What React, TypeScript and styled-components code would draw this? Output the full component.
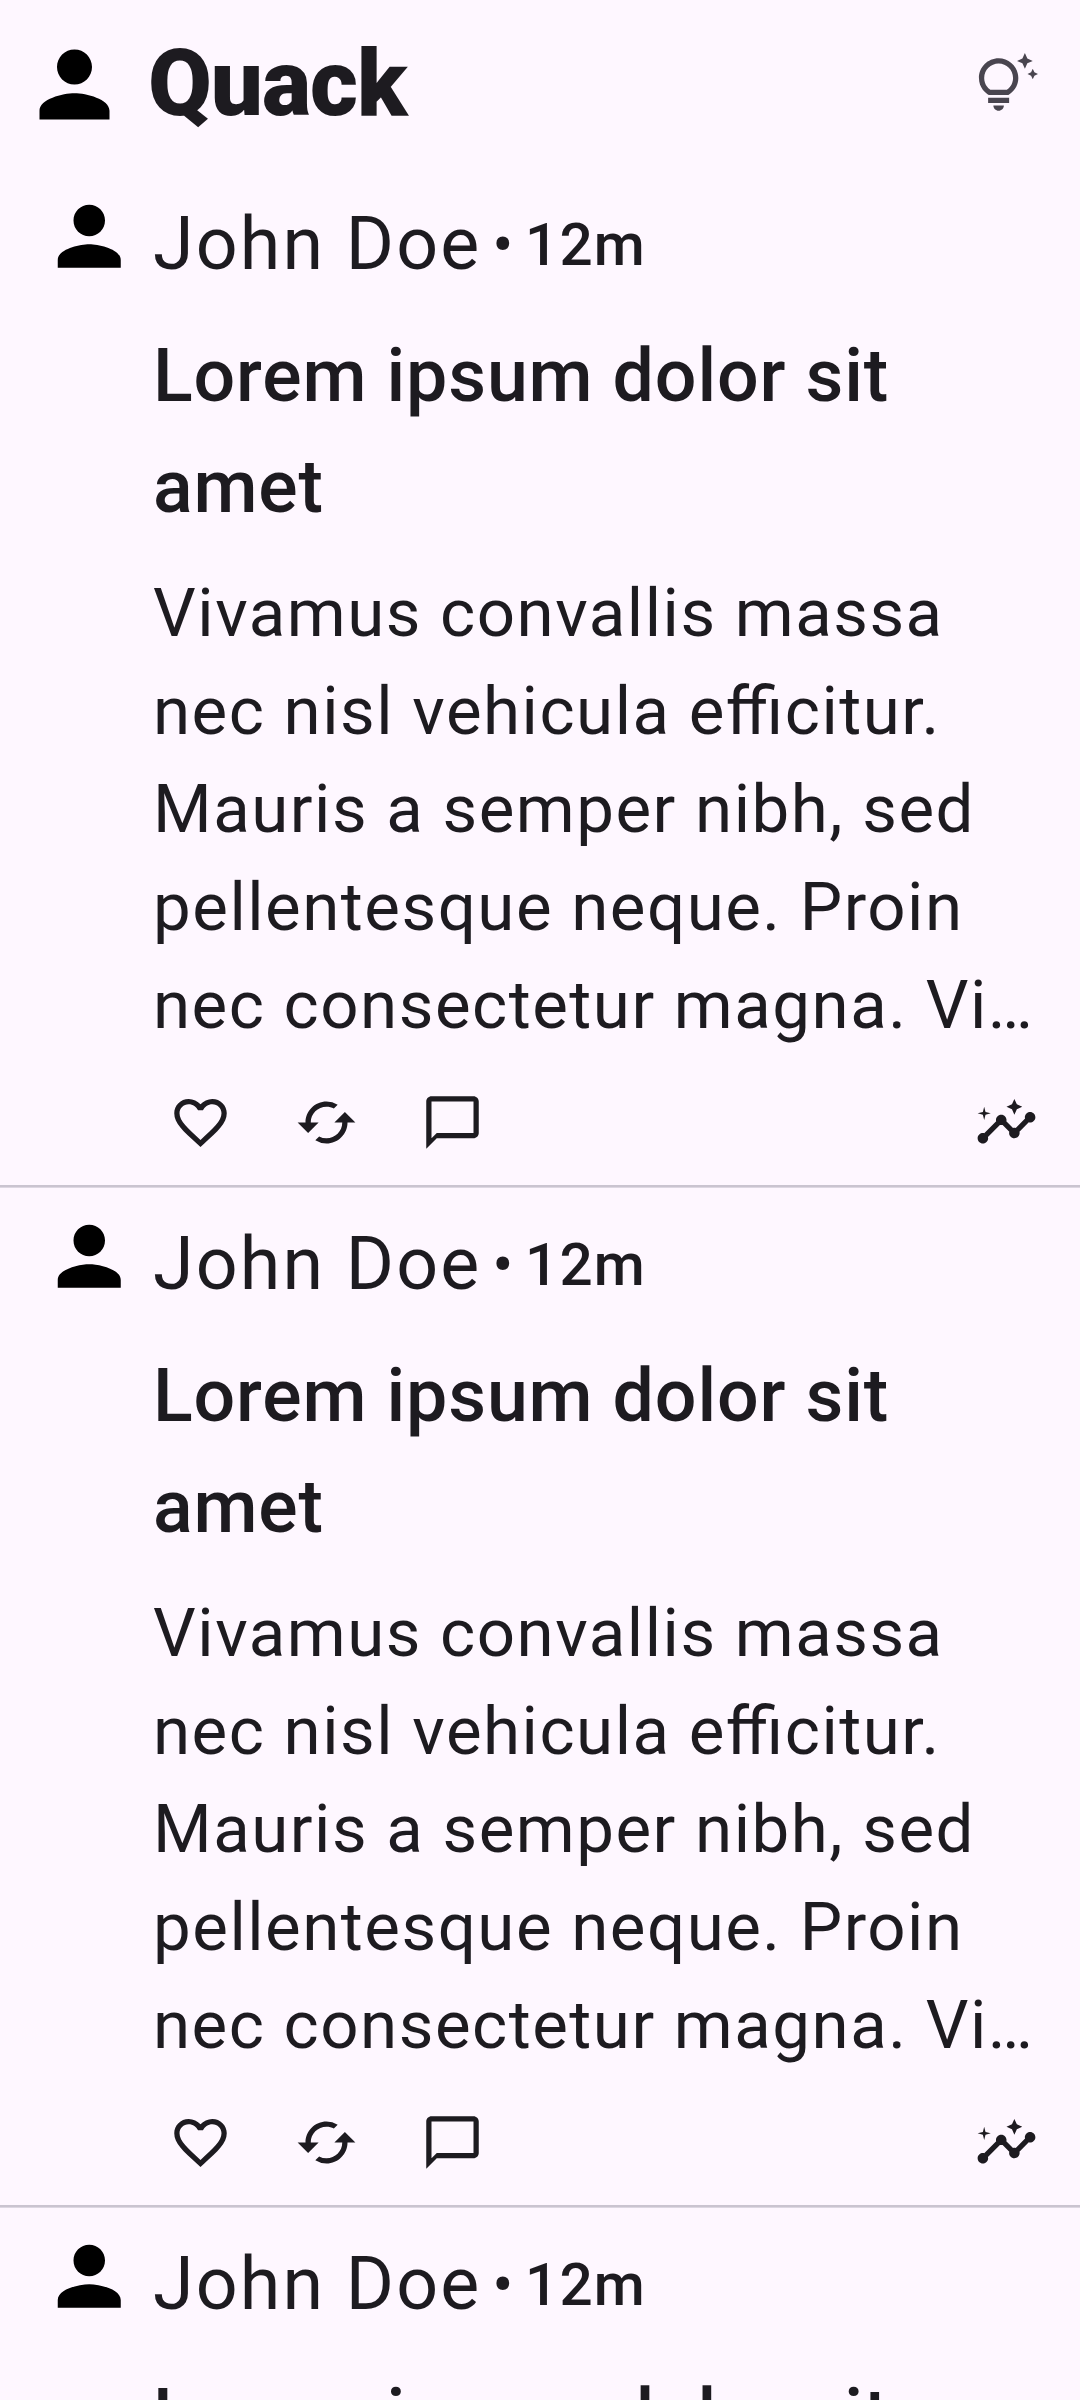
import React from "react";
import styled, { createGlobalStyle } from "styled-components";
import {
  MdPerson,
  MdOutlineTipsAndUpdates,
  MdFavoriteBorder,
  MdCached,
  MdOutlineChatBubbleOutline,
  MdInsights,
} from "react-icons/md";

const GlobalStyle = createGlobalStyle`
  html, body { margin: 0; padding: 0; background: #fef7ff; }
  * { box-sizing: border-box; }
`;

const Screen = styled.main`
  width: 1080px;
  height: 2400px;
  overflow: hidden;
  display: flex;
  flex-direction: column;
  background: #fef7ff;
  color: #1d1b20;
  font-family: Roboto, "Noto Sans", sans-serif;
`;

const TopBar = styled.header`
  flex: none;
  height: 168px;
  padding: 0 42px 0 22px;
  display: flex;
  align-items: center;
`;

const Avatar = styled(MdPerson)<{ $size: number }>`
  flex: none;
  width: ${(p) => p.$size}px;
  height: ${(p) => p.$size}px;
  color: #000;
`;

const Brand = styled.h1`
  flex: 1;
  margin: 0 0 0 21px;
  font-size: 92.4px;
  line-height: 168px;
  font-weight: 900;
  letter-spacing: -1px;
`;

const TipsIcon = styled(MdOutlineTipsAndUpdates)`
  flex: none;
  width: 63px;
  height: 63px;
  color: #49454f;
`;

const Post = styled.article`
  flex: none;
  height: 1017px;
  padding: 21px 42px 0;
  display: grid;
  grid-template-columns: 94.5px 1fr;
  column-gap: 16.5px;
  align-items: start;
`;

const Divider = styled.div`
  flex: none;
  height: 3px;
  background: linear-gradient(#cac4d0 2px, #ddd7e2 2px);
`;

const Content = styled.div`
  min-width: 0;
  display: flex;
  flex-direction: column;
`;

const Byline = styled.div`
  height: 111px;
  display: flex;
  align-items: center;
  gap: 11px;
  white-space: nowrap;
`;

const Author = styled.span`
  font-size: 73.5px;
  line-height: 111px;
  letter-spacing: 2.2px;
`;

const Age = styled.span`
  font-size: 58.5px;
  line-height: 88px;
  font-weight: 500;
  letter-spacing: 1.1px;
`;

const Title = styled.h2`
  margin: 21px 0 0;
  font-size: 73.5px;
  line-height: 111px;
  font-weight: 500;
  letter-spacing: 0.85px;
`;

const Body = styled.p`
  margin: 21px 0 0;
  font-size: 67.2px;
  line-height: 98px;
  letter-spacing: 1.51px;
  font-feature-settings: "liga" 1;
`;

const BodyLine = styled.span`
  display: block;
  white-space: nowrap;
`;

const Actions = styled.div`
  margin-top: 37px;
  padding-left: 16px;
  display: flex;
  gap: 63px;

  svg {
    width: 63px;
    height: 63px;
  }

  svg:last-child {
    margin-left: auto;
  }
`;

type PostData = { id: number; author: string; age: string; title: string; body: string[] };

const posts: PostData[] = [1, 2, 3].map((id) => ({
  id,
  author: "John Doe",
  age: "12m",
  title: "Lorem ipsum dolor sit amet",
  body: [
    "Vivamus convallis massa",
    "nec nisl vehicula efficitur.",
    "Mauris a semper nibh, sed",
    "pellentesque neque. Proin",
    "nec consectetur magna. Vi…",
  ],
}));

function PostItem({ post }: { post: PostData }) {
  return (
    <Post>
      <Avatar $size={94.5} />
      <Content>
        <Byline>
          <Author>{post.author}</Author>
          <Age>•</Age>
          <Age>{post.age}</Age>
        </Byline>
        <Title>{post.title}</Title>
        <Body>
          {post.body.map((line) => (
            <BodyLine key={line}>{line}</BodyLine>
          ))}
        </Body>
        <Actions>
          <MdFavoriteBorder />
          <MdCached />
          <MdOutlineChatBubbleOutline />
          <MdInsights />
        </Actions>
      </Content>
    </Post>
  );
}

export default function App() {
  return (
    <Screen>
      <GlobalStyle />
      <TopBar>
        <Avatar $size={105} />
        <Brand>Quack</Brand>
        <TipsIcon />
      </TopBar>
      {posts.map((post) => (
        <React.Fragment key={post.id}>
          <PostItem post={post} />
          <Divider />
        </React.Fragment>
      ))}
    </Screen>
  );
}
